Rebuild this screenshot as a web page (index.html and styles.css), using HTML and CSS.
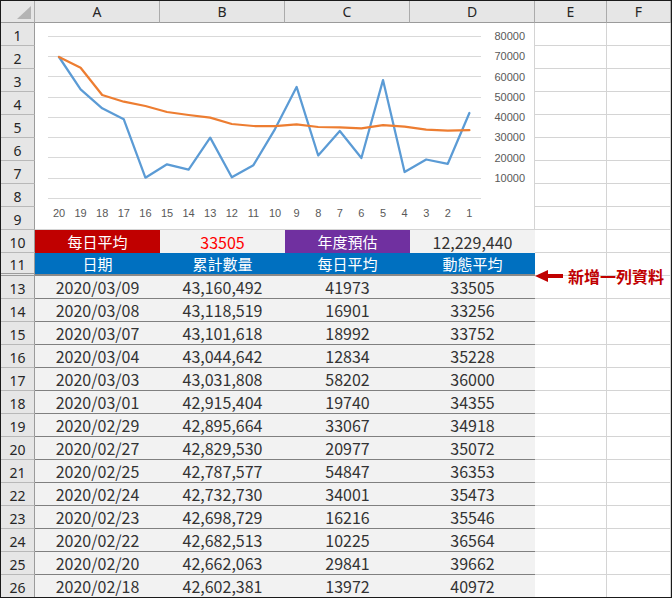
FILE: index.html
```html
<!DOCTYPE html>
<html>
<head>
<meta charset="utf-8">
<link rel="stylesheet" href="styles.css">
</head>
<body>
<div class="sheet">
  <div class="corner"><span class="tri"></span></div>
  <div class="ch">A</div><div class="ch">B</div><div class="ch">C</div><div class="ch">D</div><div class="ch">E</div><div class="ch">F</div>

  <div class="chart">
    <svg width="499" height="206" viewBox="35 23 499 206" xmlns="http://www.w3.org/2000/svg">
      <g stroke="#d9d9d9" stroke-width="1">
        <line x1="48" y1="36.5" x2="481" y2="36.5"/>
        <line x1="48" y1="56.5" x2="481" y2="56.5"/>
        <line x1="48" y1="76.5" x2="481" y2="76.5"/>
        <line x1="48" y1="97.5" x2="481" y2="97.5"/>
        <line x1="48" y1="117.5" x2="481" y2="117.5"/>
        <line x1="48" y1="137.5" x2="481" y2="137.5"/>
        <line x1="48" y1="157.5" x2="481" y2="157.5"/>
        <line x1="48" y1="178.5" x2="481" y2="178.5"/>
        <line x1="48" y1="198.5" x2="481" y2="198.5"/>
      </g>
      <g class="ylab" text-anchor="end">
        <text x="525" y="40">80000</text>
        <text x="525" y="60">70000</text>
        <text x="525" y="80.5">60000</text>
        <text x="525" y="101">50000</text>
        <text x="525" y="121">40000</text>
        <text x="525" y="141">30000</text>
        <text x="525" y="161.5">20000</text>
        <text x="525" y="182">10000</text>
      </g>
      <g class="xlab" text-anchor="middle">
        <text x="59" y="217">20</text><text x="80.6" y="217">19</text><text x="102.2" y="217">18</text><text x="123.8" y="217">17</text><text x="145.4" y="217">16</text><text x="167" y="217">15</text><text x="188.6" y="217">14</text><text x="210.2" y="217">13</text><text x="231.8" y="217">12</text><text x="253.4" y="217">11</text><text x="275" y="217">10</text><text x="296.6" y="217">9</text><text x="318.2" y="217">8</text><text x="339.8" y="217">7</text><text x="361.4" y="217">6</text><text x="383" y="217">5</text><text x="404.6" y="217">4</text><text x="426.2" y="217">3</text><text x="447.8" y="217">2</text><text x="469.4" y="217">1</text>
      </g>
      <polyline fill="none" stroke="#5b9bd5" stroke-width="2.25" stroke-linejoin="round" stroke-linecap="round"
        points="59,57 80.6,89.3 102.2,108.3 123.8,119.3 145.4,177.7 167,164.3 188.6,169.7 210.2,137.6 231.8,177.3 253.4,165.2 275,129.1 296.6,86.9 318.2,155.5 339.8,131 361.4,158 383,80.1 404.6,172 426.2,159.5 447.8,163.8 469.4,113"/>
      <polyline fill="none" stroke="#ed7d31" stroke-width="2.25" stroke-linejoin="round" stroke-linecap="round"
        points="59,57 80.6,67.7 102.2,95 123.8,101.7 145.4,106 167,112 188.6,115 210.2,117.7 231.8,124 253.4,126 275,126.2 296.6,124.4 318.2,127 339.8,127.3 361.4,128.4 383,125.1 404.6,126.7 426.2,129.7 447.8,130.7 469.4,130.2"/>
    </svg>
  </div>

  <div class="rh">1</div><div class="c"></div><div class="c"></div>
  <div class="rh">2</div><div class="c"></div><div class="c"></div>
  <div class="rh">3</div><div class="c"></div><div class="c"></div>
  <div class="rh">4</div><div class="c"></div><div class="c"></div>
  <div class="rh">5</div><div class="c"></div><div class="c"></div>
  <div class="rh">6</div><div class="c"></div><div class="c"></div>
  <div class="rh">7</div><div class="c"></div><div class="c"></div>
  <div class="rh">8</div><div class="c"></div><div class="c"></div>
  <div class="rh">9</div><div class="c"></div><div class="c"></div>

  <div class="rh">10</div>
  <div class="t10 red">每日平均</div>
  <div class="t10 gray num redtext">33505</div>
  <div class="t10 purple">年度預估</div>
  <div class="t10 gray num">12,229,440</div>
  <div class="c"></div><div class="c"></div>

  <div class="rh rh11">11</div>
  <div class="hd">日期</div><div class="hd">累計數量</div><div class="hd">每日平均</div><div class="hd">動態平均</div>
  <div class="c"></div><div class="c"></div>

  <div class="rh">13</div><div class="t">2020/03/09</div><div class="t">43,160,492</div><div class="t">41973</div><div class="t">33505</div><div class="c"></div><div class="c"></div>
  <div class="rh">14</div><div class="t">2020/03/08</div><div class="t">43,118,519</div><div class="t">16901</div><div class="t">33256</div><div class="c"></div><div class="c"></div>
  <div class="rh">15</div><div class="t">2020/03/07</div><div class="t">43,101,618</div><div class="t">18992</div><div class="t">33752</div><div class="c"></div><div class="c"></div>
  <div class="rh">16</div><div class="t">2020/03/04</div><div class="t">43,044,642</div><div class="t">12834</div><div class="t">35228</div><div class="c"></div><div class="c"></div>
  <div class="rh">17</div><div class="t">2020/03/03</div><div class="t">43,031,808</div><div class="t">58202</div><div class="t">36000</div><div class="c"></div><div class="c"></div>
  <div class="rh">18</div><div class="t">2020/03/01</div><div class="t">42,915,404</div><div class="t">19740</div><div class="t">34355</div><div class="c"></div><div class="c"></div>
  <div class="rh">19</div><div class="t">2020/02/29</div><div class="t">42,895,664</div><div class="t">33067</div><div class="t">34918</div><div class="c"></div><div class="c"></div>
  <div class="rh">20</div><div class="t">2020/02/27</div><div class="t">42,829,530</div><div class="t">20977</div><div class="t">35072</div><div class="c"></div><div class="c"></div>
  <div class="rh">21</div><div class="t">2020/02/25</div><div class="t">42,787,577</div><div class="t">54847</div><div class="t">36353</div><div class="c"></div><div class="c"></div>
  <div class="rh">22</div><div class="t">2020/02/24</div><div class="t">42,732,730</div><div class="t">34001</div><div class="t">35473</div><div class="c"></div><div class="c"></div>
  <div class="rh">23</div><div class="t">2020/02/23</div><div class="t">42,698,729</div><div class="t">16216</div><div class="t">35546</div><div class="c"></div><div class="c"></div>
  <div class="rh">24</div><div class="t">2020/02/22</div><div class="t">42,682,513</div><div class="t">10225</div><div class="t">36564</div><div class="c"></div><div class="c"></div>
  <div class="rh">25</div><div class="t">2020/02/20</div><div class="t">42,662,063</div><div class="t">29841</div><div class="t">39662</div><div class="c"></div><div class="c"></div>
  <div class="rh">26</div><div class="t">2020/02/18</div><div class="t">42,602,381</div><div class="t">13972</div><div class="t">40972</div><div class="c"></div><div class="c"></div>

  <div class="note">
    <svg class="arrow" width="28" height="12" viewBox="0 0 28 12" xmlns="http://www.w3.org/2000/svg">
      <polygon points="0,6 13,0 13,12" fill="#c00000"/>
      <rect x="12" y="4" width="16" height="4" fill="#c00000"/>
    </svg>
    <span class="notetext">新增一列資料</span>
  </div>
</div>
</body>
</html>
```

FILE: styles.css
```css
html, body {
  margin: 0;
  padding: 0;
  background: #ffffff;
}

.sheet {
  position: relative;
  width: 672px;
  height: 598px;
  box-sizing: border-box;
  border: 1px solid #1a1a1a;
  overflow: hidden;
  display: grid;
  grid-template-columns: 34px repeat(4, 125px) 72px 1fr;
  grid-template-rows: 22px repeat(25, 23px);
  font-family: "Noto Sans", "Noto Sans CJK TC", sans-serif;
}

.sheet > div {
  box-sizing: border-box;
}

.corner {
  background: #e6e6e6;
  border-right: 1px solid #ababab;
  border-bottom: 1px solid #9b9b9b;
  display: flex;
  align-items: flex-end;
  justify-content: flex-end;
  padding: 0 3px 3px 0;
}

.tri {
  display: block;
  width: 14px;
  height: 13px;
  background: #b4b4b4;
  clip-path: polygon(100% 0, 100% 100%, 0 100%);
}

.ch {
  background: #e6e6e6;
  border-right: 1px solid #ababab;
  border-bottom: 1px solid #9b9b9b;
  display: flex;
  align-items: center;
  justify-content: center;
  font-size: 14px;
  color: #262626;
  padding-bottom: 1px;
}

.rh {
  background: #e6e6e6;
  border-right: 1px solid #9b9b9b;
  border-bottom: 1px solid #b8b8b8;
  display: flex;
  align-items: center;
  justify-content: center;
  font-size: 14px;
  color: #262626;
  padding-top: 2px;
}

.rh11 {
  border-bottom: 3px double #9b9b9b;
}

.c {
  background: #ffffff;
  border-right: 1px solid #d4d4d4;
  border-bottom: 1px solid #d4d4d4;
}

.chart {
  grid-column: 2 / 6;
  grid-row: 2 / 11;
  background: #ffffff;
  border-right: 1px solid #d4d4d4;
  border-bottom: 1px solid #d4d4d4;
}

.chart svg {
  display: block;
}

.ylab text, .xlab text {
  font-family: "Liberation Sans", "Noto Sans", sans-serif;
  font-size: 11px;
  fill: #595959;
}

.t10, .hd, .t {
  display: flex;
  align-items: center;
  justify-content: center;
  font-family: "Noto Sans CJK TC", "Noto Sans", sans-serif;
  font-size: 15px;
}

.t10 {
  color: #ffffff;
}

.red { background: #c00000; }
.purple { background: #7030a0; }
.gray { background: #f2f2f2; color: #333333; }
.num { font-size: 16px; }
.redtext { color: #ff0000; }

.hd {
  background: #0070c0;
  color: #ffffff;
  border-bottom: 2px solid #8a8a8a;
}

.t {
  background: #f2f2f2;
  color: #333333;
  font-size: 16px;
  border-bottom: 1px solid #808080;
}

.note {
  position: absolute;
  left: 534px;
  top: 265px;
  height: 20px;
  display: flex;
  align-items: center;
  gap: 5px;
}

.arrow {
  display: block;
}

.notetext {
  font-family: "Noto Sans CJK TC", sans-serif;
  font-weight: bold;
  font-size: 16px;
  color: #c00000;
  line-height: 20px;
}
```
